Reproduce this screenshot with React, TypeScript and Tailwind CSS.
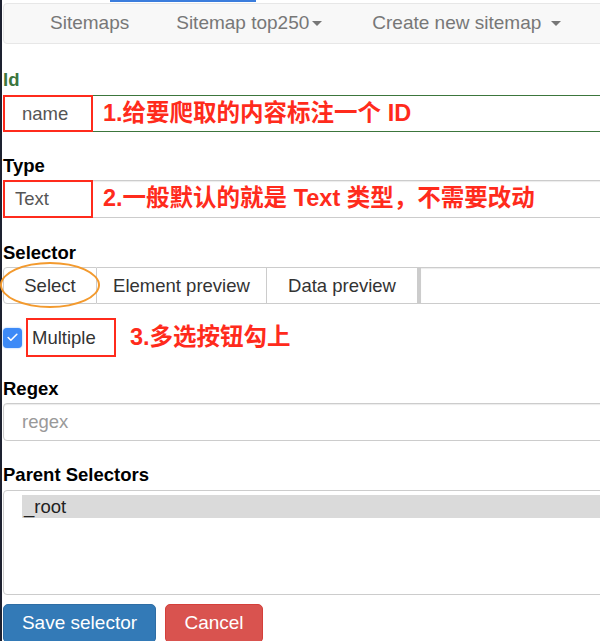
import React from 'react';
import { Check } from 'lucide-react';

const Caret = () => (
  <span className="inline-block w-0 h-0 border-x-[5px] border-x-transparent border-t-[5px] border-t-[#777]" />
);

const Label: React.FC<{ children: React.ReactNode; className?: string }> = ({ children, className }) => (
  <div className={'h-[24px] shrink-0 leading-[24px] text-[18.5px] font-bold ' + (className || 'text-[#333]')}>{children}</div>
);

const Note: React.FC<{ children: React.ReactNode; className?: string }> = ({ children, className }) => (
  <span className={'text-[23.5px] font-bold text-[#ff2b1c] whitespace-nowrap leading-none ' + (className || '')}>{children}</span>
);

export default function App() {
  return (
    <div className="w-[600px] h-[641px] overflow-hidden bg-white flex font-['Liberation_Sans','Noto_Sans_CJK_SC',sans-serif]">
      <div className="w-[2px] shrink-0 bg-[#1d2130]" />
      <div className="w-[660px] shrink-0 self-start pl-[1px] flex flex-col">
        {/* top indicator */}
        <div className="h-[3px]">
          <div className="ml-[107px] w-[146px] h-[2px] bg-[#3b7ddd]" />
        </div>

        {/* navbar */}
        <div className="h-[41px] border border-[#e7e7e7] rounded-[4px] bg-[#f8f8f8] flex items-center pl-[46px] text-[19px] text-[#777]">
          <span>Sitemaps</span>
          <span className="ml-[47px]">Sitemap top250</span>
          <span className="ml-[3px] flex items-center"><Caret /></span>
          <span className="ml-[50px]">Create new sitemap</span>
          <span className="ml-[10px] flex items-center"><Caret /></span>
        </div>

        {/* Id */}
        <Label className="mt-[24px] text-[#3c763d]">Id</Label>
        <div className="mt-[3px] h-[37px] border-y border-l border-[#3c763d] flex">
          <div className="-ml-px -my-px w-[90px] border-2 border-[#ff2b1c] flex items-center pl-[17px] text-[18.5px] text-[#555]">
            name
          </div>
          <div className="ml-[10px] flex items-center">
            <Note>1.给要爬取的内容标注一个 ID</Note>
          </div>
        </div>

        {/* Type */}
        <Label className="mt-[22px]">Type</Label>
        <div className="mt-[2px] h-[38px] border-y border-l border-[#ccc] shadow-[inset_0_1px_1px_rgba(0,0,0,0.08)] flex">
          <div className="-ml-px -my-px w-[90px] border-2 border-[#ff2b1c] flex items-center pl-[10px] text-[18.5px] text-[#555]">
            Text
          </div>
          <div className="ml-[10px] flex items-center">
            <Note>2.一般默认的就是 Text 类型，不需要改动</Note>
          </div>
        </div>

        {/* Selector */}
        <Label className="mt-[23px]">Selector</Label>
        <div className="relative mt-[2px] h-[37px] flex text-[18.5px] text-[#333]">
          <div className="w-[94px] border border-[#ccc] rounded-l-[4px] flex items-center justify-center">Select</div>
          <div className="w-[170px] border-y border-r border-[#ccc] flex items-center justify-center">Element preview</div>
          <div className="w-[151px] border-y border-r border-[#ccc] flex items-center justify-center">Data preview</div>
          <div className="flex-1 border-y border-l-[3px] border-[#ccc] shadow-[inset_0_1px_1px_rgba(0,0,0,0.08)]" />
          <div className="absolute left-[-3px] top-[-5px] w-[100px] h-[46px] border-2 border-[#f39a2e] rounded-[50%]" />
        </div>

        {/* Multiple */}
        <div className="mt-[14px] h-[39px] flex items-center">
          <div className="w-[19px] h-[20px] rounded-[4px] bg-[#3d8af7] flex items-center justify-center shadow-[0_0_2px_rgba(61,138,247,0.6)]">
            <Check className="w-[13px] h-[13px] text-white" strokeWidth={3} />
          </div>
          <div className="ml-[4px] w-[90px] h-[39px] border-2 border-[#ff2b1c] flex items-center pl-[4px] text-[18.5px] text-[#333]">
            Multiple
          </div>
          <Note className="ml-[14px]">3.多选按钮勾上</Note>
        </div>

        {/* Regex */}
        <Label className="mt-[20px]">Regex</Label>
        <div className="mt-[2px] h-[38px] border border-[#ccc] rounded-[4px] shadow-[inset_0_1px_1px_rgba(0,0,0,0.08)] flex items-center pl-[18px] text-[18.5px] text-[#999]">
          regex
        </div>

        {/* Parent selectors */}
        <Label className="mt-[22px]">Parent Selectors</Label>
        <div className="mt-[3px] h-[105px] border border-[#ccc] rounded-[4px] pt-[4px] pl-[18px]">
          <div className="h-[23px] bg-[#dadada] pl-[2px] leading-[23px] text-[18.5px] text-[#222]">_root</div>
        </div>

        {/* buttons */}
        <div className="mt-[9px] flex text-[19px] text-white">
          <button className="w-[153px] h-[39px] bg-[#337ab7] border border-[#2e6da4] rounded-[5px]">Save selector</button>
          <button className="ml-[9px] w-[98px] h-[39px] bg-[#d9534f] border border-[#d43f3a] rounded-[5px]">Cancel</button>
        </div>
      </div>
    </div>
  );
}
